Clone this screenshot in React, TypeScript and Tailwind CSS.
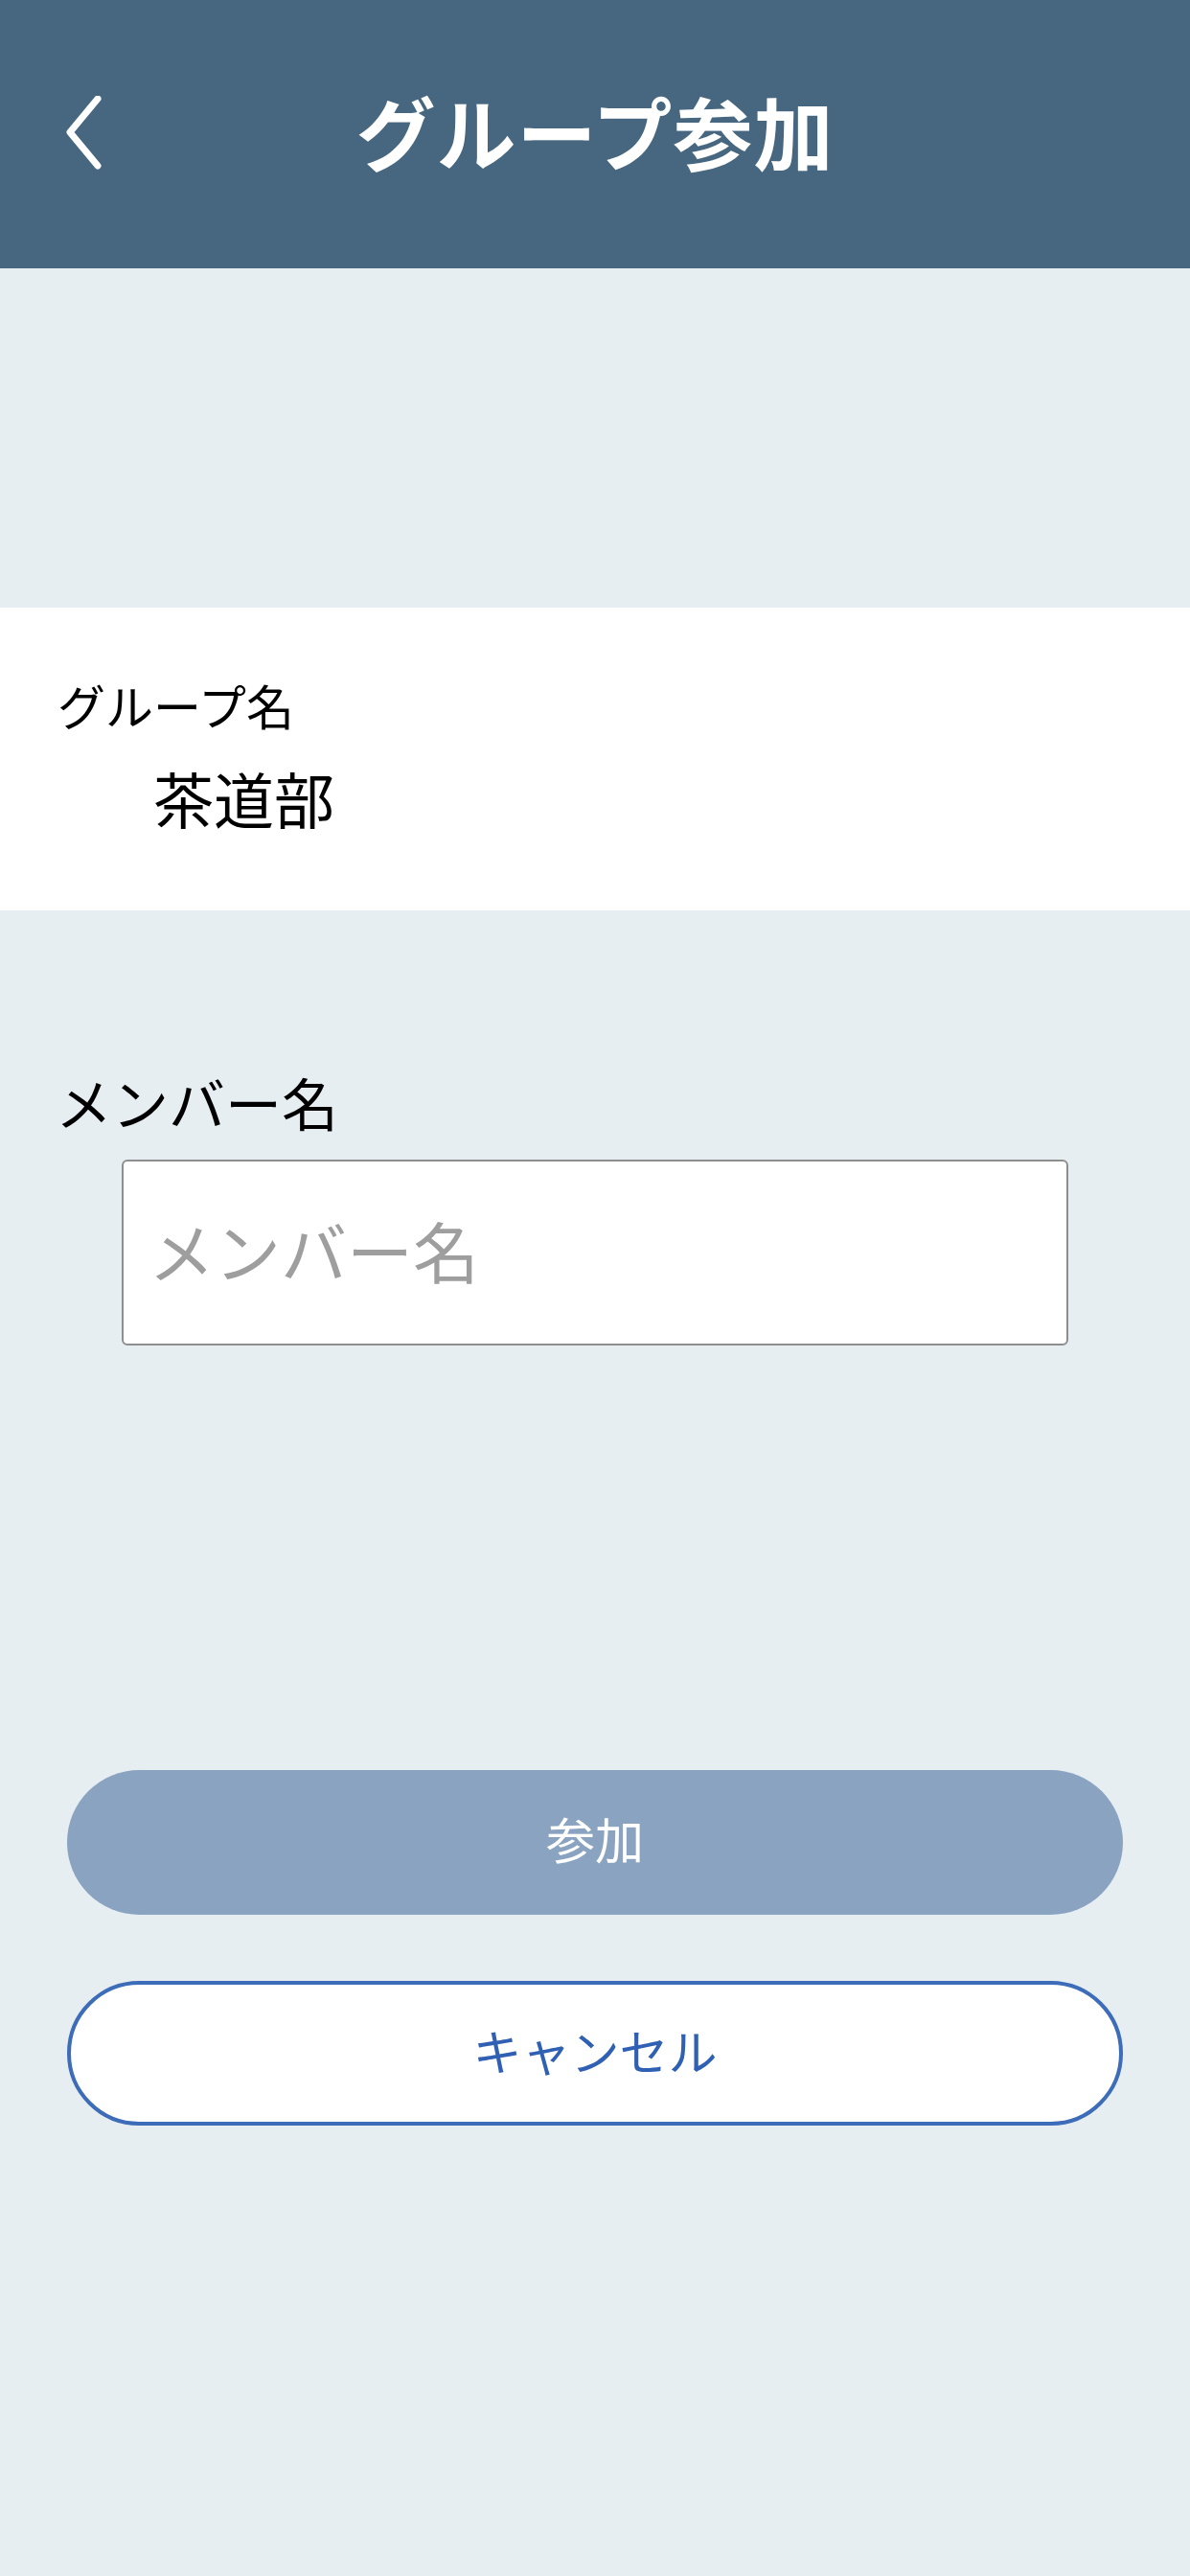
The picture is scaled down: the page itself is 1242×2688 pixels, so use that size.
const jp = { fontFamily: '"Noto Sans CJK JP", "Noto Sans", sans-serif' }

function Header() {
  return (
    <header className="grid h-[280px] grid-cols-[1fr_auto_1fr] items-center bg-[#46677f] text-white">
      <button className="flex items-center justify-start pl-[62px]">
        <svg width="50" height="80" viewBox="0 0 50 80" fill="none">
          <path
            d="M40 14 L11 49 L40 84"
            transform="translate(0 -11)"
            stroke="white"
            strokeWidth="7"
            strokeLinecap="round"
            strokeLinejoin="round"
          />
        </svg>
      </button>
      <h1 className="pb-[8px] text-[83px] font-bold leading-none tracking-[1px]">
        グループ参加
      </h1>
      <div />
    </header>
  )
}

export default function App() {
  return (
    <div className="min-h-[2688px] w-full bg-[#e6eef2]" style={jp}>
      <Header />

      <section className="mt-[354px] h-[316px] bg-white pl-[60px] pt-[76px]">
        <p className="text-[50px] leading-none text-black">グループ名</p>
        <p className="mt-[40px] pl-[100px] text-[63px] leading-none text-black">
          茶道部
        </p>
      </section>

      <div className="pt-[170px]">
        <label className="block pl-[58px] text-[59px] leading-none text-black">
          メンバー名
        </label>
        <div className="mt-[31px] pl-[127px]">
          <input
            type="text"
            placeholder="メンバー名"
            className="h-[194px] w-[988px] rounded-[6px] border-2 border-[#8e8e8e] bg-white px-[26px] pb-[6px] text-[69px] text-black outline-none placeholder:text-[#9e9e9e]"
            style={jp}
          />
        </div>
      </div>

      <div className="flex flex-col gap-[69px] px-[70px] pt-[443px]">
        <button className="h-[151px] w-full rounded-full bg-[#89a3c1] pb-[8px] text-[51px] leading-none text-white">
          参加
        </button>
        <button className="h-[151px] w-full rounded-full border-[4px] border-[#3d6cb8] bg-white pb-[6px] text-[51px] leading-none text-[#2f60b3]">
          キャンセル
        </button>
      </div>
    </div>
  )
}
